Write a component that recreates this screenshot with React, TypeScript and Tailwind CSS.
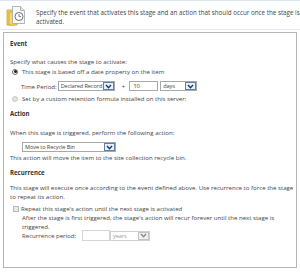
import React from "react";

const Chevron = ({ color = "#1f3a68" }: { color?: string }) => (
  <svg width="7" height="5" viewBox="0 0 7 5">
    <path d="M1 1 L3.5 3.8 L6 1" fill="none" stroke={color} strokeWidth="1.4" />
  </svg>
);

const Select = ({
  text,
  w,
  disabled = false,
}: {
  text: string;
  w: string;
  disabled?: boolean;
}) => (
  <div
    className={`flex h-[10px] items-stretch border ${
      disabled ? "border-[#d0d0d0] text-[#9a9a9a]" : "border-[#a8a8a8]"
    } bg-white ${w}`}
  >
    <div className="flex-1 pl-[2px] text-[5.6px] leading-[8px] whitespace-nowrap overflow-hidden tracking-[-0.1px]">
      {text}
    </div>
    <div
      className={`flex w-[11px] items-center justify-center border ${
        disabled ? "border-[#c4c4c4] bg-[#f0f0f0]" : "border-[#5f7fae] bg-[#e9f0f9]"
      }`}
    >
      <Chevron color={disabled ? "#8a8a8a" : "#1f3a68"} />
    </div>
  </div>
);

const Icon = () => (
  <svg width="20" height="20" viewBox="0 0 20 20">
    <path d="M1 4 h6 l2 2 v13 h-8 z" fill="#f3cd55" stroke="#c9a233" strokeWidth="0.8" />
    <path d="M3 6 h6 l2 2 v11 h-8 z" fill="#f7d867" stroke="#c9a233" strokeWidth="0.8" />
    <path d="M6.5 0.5 h8 l4 4 v13 h-12 z" fill="#f8f8f8" stroke="#9ea4ab" strokeWidth="0.8" />
    <path d="M14.5 0.5 v4 h4" fill="#e4e4e4" stroke="#9ea4ab" strokeWidth="0.8" />
    <circle cx="13" cy="10.5" r="4" fill="#ffffff" stroke="#5a5f66" strokeWidth="0.9" />
    <path d="M13 8 v2.6 h2" fill="none" stroke="#5a5f66" strokeWidth="0.8" />
  </svg>
);

export default function App() {
  return (
    <div
      className="w-[300px] h-[273px] overflow-hidden bg-white text-[6.1px] text-[#444] border-t border-[#dde6ef]"
      style={{ fontFamily: '"Open Sans", "Noto Sans", sans-serif' }}
    >
      <div className="flex h-[29px] border-b border-[#e6e6e6]">
        <div className="pl-[6px] pt-[5px]">
          <Icon />
        </div>
        <div className="pl-[10px] pt-[7px] text-[6.25px] leading-[9px] whitespace-nowrap">
          Specify the event that activates this stage and an action that should occur once the stage is
          <br />
          activated.
        </div>
      </div>

      <div className="mx-[3px] mt-[2px] h-[236px] border border-[#b5b5b5] pl-[6px] leading-[9px] whitespace-nowrap">
        <div className="mt-[6px] font-bold text-[#333]">Event</div>
        <div className="mt-[9px]">Specify what causes the stage to activate:</div>
        <div className="mt-[1px] flex items-center pl-[2px]">
          <div className="flex h-[6px] w-[6px] items-center justify-center rounded-full border border-[#6b6b6b] bg-white">
            <div className="h-[3px] w-[3px] rounded-full bg-[#222]" />
          </div>
          <span className="ml-[4px]">This stage is based off a date property on the item</span>
        </div>
        <div className="mt-[5px] flex h-[10px] items-center pl-[11px]">
          <span>Time Period:</span>
          <div className="ml-[1px]">
            <Select text="Declared Record" w="w-[57px]" />
          </div>
          <span className="ml-[7px] mr-[4px]">+</span>
          <div className="h-[10px] w-[29px] border border-[#a8a8a8] pl-[3px] leading-[8px]">10</div>
          <div className="ml-[2px]">
            <Select text="days" w="w-[37px]" />
          </div>
        </div>
        <div className="mt-[3px] flex items-center pl-[2px]">
          <div className="h-[6px] w-[6px] rounded-full border border-[#c9c9c9] bg-[#e3e3e3]" />
          <span className="ml-[4px]">Set by a custom retention formula installed on this server:</span>
        </div>

        <div className="mt-[6px] font-bold text-[#333]">Action</div>
        <div className="mt-[10px]">When this stage is triggered, perform the following action:</div>
        <div className="mt-[5px] pl-[12px]">
          <Select text="Move to Recycle Bin" w="w-[94px]" />
        </div>
        <div className="mt-[1px]">This action will move the item to the site collection recycle bin.</div>

        <div className="mt-[6px] font-bold text-[#333]">Recurrence</div>
        <div className="mt-[6px]">
          This stage will execute once according to the event defined above. Use recurrence to force the stage
          <br />
          to repeat its action.
        </div>
        <div className="mt-[3px] flex items-center pl-[3px]">
          <div className="h-[6px] w-[6px] border border-[#b9b9b9] bg-[#e9e9e9]" />
          <span className="ml-[2px]">Repeat this stage's action until the next stage is activated</span>
        </div>
        <div className="pl-[12px]">
          After the stage is first triggered, the stage's action will recur forever until the next stage is
          <br />
          triggered.
        </div>
        <div className="-mt-[1px] flex h-[11px] items-center pl-[12px]">
          <span>Recurrence period:</span>
          <div className="ml-[6px] h-[11px] w-[28px] border border-[#d4d4d4]" />
          <Select text="years" w="w-[40px]" disabled />
        </div>
      </div>
    </div>
  );
}
